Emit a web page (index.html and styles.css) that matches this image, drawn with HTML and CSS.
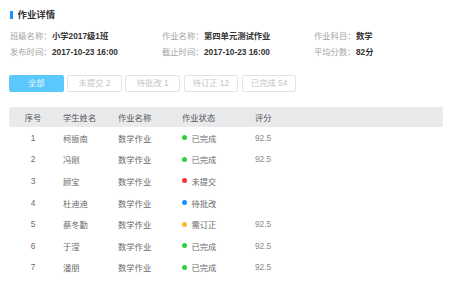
FILE: index.html
```html
<!DOCTYPE html>
<html lang="zh">
<head>
<meta charset="utf-8">
<link rel="stylesheet" href="styles.css">
</head>
<body>
<div class="page">
  <h1 class="title"><span class="bar"></span>作业详情</h1>
  <div class="info">
    <div class="item"><span class="label">班级名称：</span><span class="value">小学2017级1班</span></div>
    <div class="item"><span class="label">作业名称：</span><span class="value">第四单元测试作业</span></div>
    <div class="item"><span class="label">作业科目：</span><span class="value">数学</span></div>
    <div class="item"><span class="label">发布时间：</span><span class="value">2017-10-23 16:00</span></div>
    <div class="item"><span class="label">截止时间：</span><span class="value">2017-10-23 16:00</span></div>
    <div class="item"><span class="label">平均分数：</span><span class="value">82分</span></div>
  </div>
  <div class="tabs">
    <div class="tab active">全部</div>
    <div class="tab">未提交 2</div>
    <div class="tab">待批改 1</div>
    <div class="tab">待订正 12</div>
    <div class="tab">已完成 54</div>
  </div>
  <div class="table">
    <div class="row head">
      <div class="c1">序号</div><div class="c">学生姓名</div><div class="c">作业名称</div><div class="c">作业状态</div><div class="c">评分</div>
    </div>
    <div class="row">
      <div class="c1">1</div><div class="c">柯振南</div><div class="c">数学作业</div><div class="c"><i class="dot green"></i>已完成</div><div class="c num">92.5</div>
    </div>
    <div class="row">
      <div class="c1">2</div><div class="c">冯刚</div><div class="c">数学作业</div><div class="c"><i class="dot green"></i>已完成</div><div class="c num">92.5</div>
    </div>
    <div class="row">
      <div class="c1">3</div><div class="c">顾宝</div><div class="c">数学作业</div><div class="c"><i class="dot red"></i>未提交</div><div class="c num"></div>
    </div>
    <div class="row">
      <div class="c1">4</div><div class="c">杜迪迪</div><div class="c">数学作业</div><div class="c"><i class="dot blue"></i>待批改</div><div class="c num"></div>
    </div>
    <div class="row">
      <div class="c1">5</div><div class="c">蔡冬勤</div><div class="c">数学作业</div><div class="c"><i class="dot orange"></i>需订正</div><div class="c num">92.5</div>
    </div>
    <div class="row">
      <div class="c1">6</div><div class="c">于滢</div><div class="c">数学作业</div><div class="c"><i class="dot green"></i>已完成</div><div class="c num">92.5</div>
    </div>
    <div class="row">
      <div class="c1">7</div><div class="c">潘朋</div><div class="c">数学作业</div><div class="c"><i class="dot green"></i>已完成</div><div class="c num">92.5</div>
    </div>
  </div>
</div>
</body>
</html>
```

FILE: styles.css
```css
html, body {
  margin: 0;
  padding: 0;
  background: #fff;
}
body {
  font-family: "Liberation Sans", "Noto Sans CJK SC", sans-serif;
  color: #333;
  overflow: hidden;
}
.page {
  padding: 9px 7px 0 9px;
}
.title {
  margin: 0;
  height: 12px;
  display: flex;
  align-items: center;
  font-size: 9.4px;
  font-weight: bold;
  color: #333;
  line-height: 12px;
}
.bar {
  display: inline-block;
  width: 2.5px;
  height: 8px;
  margin-left: 1px;
  margin-right: 5px;
  background: #1e8fff;
}
.info {
  margin-top: 7px;
  padding-left: 1px;
  display: grid;
  grid-template-columns: 152px 152px 1fr;
  grid-auto-rows: 16px;
  font-size: 8.3px;
  line-height: 16px;
}
.item {
  display: flex;
}
.label {
  width: 42px;
  color: #a3a3a3;
}
.value {
  color: #333;
  font-weight: bold;
}
.tabs {
  margin-top: 15px;
  display: flex;
  gap: 3.6px;
}
.tab {
  width: 54.6px;
  height: 17px;
  box-sizing: border-box;
  border: 1px solid #e4e4e4;
  border-radius: 2px;
  font-size: 8.3px;
  line-height: 15px;
  text-align: center;
  color: #c4c4c4;
}
.tab.active {
  background: #5ac8fa;
  border-color: #5ac8fa;
  color: #eaf8ff;
}
.table {
  margin-top: 15px;
  font-size: 8.3px;
  color: #6a6a6a;
}
.row {
  display: grid;
  grid-template-columns: 48px 55px 64px 73px 1fr;
  height: 21.6px;
  align-items: center;
}
.row.head {
  height: 20px;
  background: #e9eaec;
  border-radius: 2px;
  color: #555;
}
.c1 {
  text-align: center;
}
.c {
  padding-left: 6px;
  display: flex;
  align-items: center;
}
.num {
  color: #8a8a8a;
}
.dot {
  display: inline-block;
  width: 5px;
  height: 5px;
  border-radius: 50%;
  margin-right: 4.5px;
}
.green { background: #2fcf3a; }
.red { background: #f5333f; }
.blue { background: #1890ff; }
.orange { background: #fbb829; }
```
